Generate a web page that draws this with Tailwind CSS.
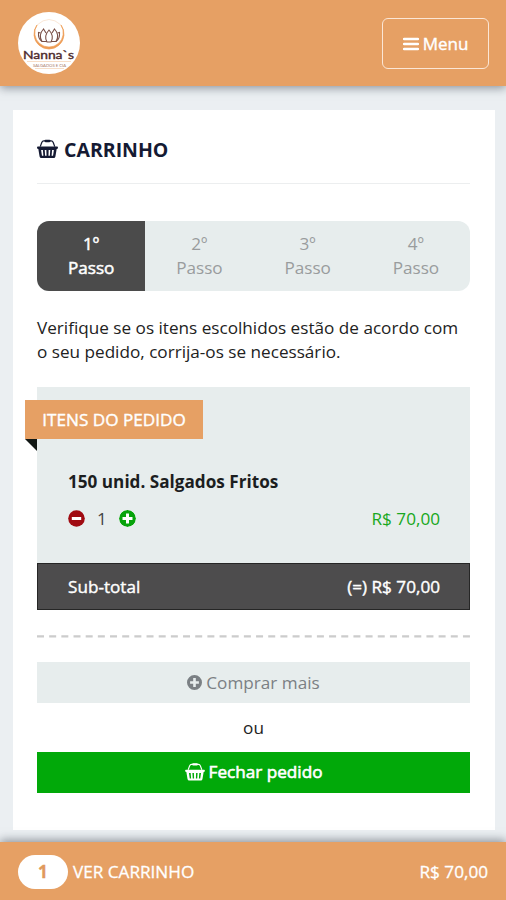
<!DOCTYPE html>
<html lang="pt-BR">
<head>
<meta charset="utf-8">
<title>Carrinho</title>
<script src="https://cdn.jsdelivr.net/npm/@tailwindcss/browser@4"></script>
</head>
<body class="h-[900px] w-[506px] overflow-hidden bg-[#ebeff2] font-['Open_Sans','Noto_Sans',sans-serif] text-[17.15px] leading-[23.5px] text-[#222]">
<svg class="hidden">
  <symbol id="basket" viewBox="0 0 22 20">
    <path d="M3.400 7.500 L5 3.200 Q5.600 1.600 7.200 1.600 H14.800 Q16.400 1.600 17 3.200 L18.600 7.500" fill="none" stroke="currentColor" stroke-width="1.300"/>
    <rect x="7.800" y="0.400" width="6.400" height="2.500" rx="1.200" fill="currentColor"/>
    <path fill="currentColor" fill-rule="evenodd" d="M1 7.400H21Q22 7.400 22 8.500T21 10H20.600L19.300 17.800Q19 19.500 17.500 19.500H4.500Q3 19.500 2.700 17.800L1.400 10H1Q0 9.600 0 8.500T1 7.400ZM4.300 11 5.200 17.200H6.700L6.200 11ZM8.100 11 8.500 17.200H10L9.800 11ZM12.200 11 12 17.200H13.500L13.900 11ZM15.800 11 15.300 17.200H16.800L17.700 11Z"/>
  </symbol>
  <symbol id="plus" viewBox="0 0 16 16">
    <path fill="currentColor" fill-rule="evenodd" d="M8 0A8 8 0 1 1 8 16A8 8 0 1 1 8 0ZM6.600 3.300V6.600H3.300V9.400H6.600V12.700H9.400V9.400H12.700V6.600H9.400V3.300Z"/>
  </symbol>
</svg>
<div class="flex h-full flex-col">
  <header class="z-10 flex h-[86px] shrink-0 items-center justify-between bg-[#e6a064] pr-[17px] pl-[18px] shadow-[0_2px_9px_rgba(60,70,80,0.55)]">
    <svg class="h-[62px] w-[62px]" viewBox="0 0 62 62">
      <circle cx="31" cy="31" r="31" fill="#fff"/>
      <path d="M19 13A15 15 0 1 0 43 13A14.300 14.300 0 1 1 19 13Z" fill="#ee9c54" stroke="#ee9c54" stroke-width=".7"/>
      <path d="M19 13Q31 2 43 13" fill="none" stroke="#f8dcc4" stroke-width=".7"/>
      <g fill="none" stroke="#7a5148" stroke-width="1.100">
        <path d="M31 18Q25.500 24 29 30H33Q36.500 24 31 18Z"/>
        <path d="M28 21 25.500 17Q20 23 24 29.500H29"/>
        <path d="M34 21 36.500 17Q42 23 38 29.500H33"/>
        <path d="M22.500 21 20.500 20.500Q20 27 24 29.500M39.500 21 41.500 20.500Q42 27 38 29.500"/>
      </g>
      <text x="5" y="46.500" textLength="51" lengthAdjust="spacingAndGlyphs" font-family="Lato" font-size="12" fill="#4d2a2c" stroke="#4d2a2c" stroke-width=".4">Nanna`s</text>
      <path d="M9 49.500H53M17 56.500H46" stroke="#f1c7a3" stroke-width=".6"/>
      <text x="15" y="54.700" textLength="33" lengthAdjust="spacingAndGlyphs" font-family="Lato" font-size="4" fill="#a87865">SALGADOS E CIA</text>
    </svg>
    <button class="mt-px flex h-[51px] w-[107px] items-center justify-center gap-[4px] rounded-[6px] border-[1.500px] border-[#fbe6d5] text-[17px] text-white [-webkit-text-stroke:0.4px_white]">
      <svg class="h-[14px] w-[16px]" viewBox="0 0 16 14"><path d="M1 2H15M1 7H15M1 12H15" stroke="#fff" stroke-width="2.400" stroke-linecap="round"/></svg>
      <span>Menu</span>
    </button>
  </header>

  <main class="mt-[24px] ml-[13px] h-[720px] w-[482px] shrink-0 bg-white px-6">
    <h1 class="flex h-[74px] w-[433px] items-center gap-[6px] border-b border-[#eceeef] pt-[7px] text-[19.5px] font-bold text-[#151a33]">
      <svg class="-mt-[2px] h-[20px] w-[21px]"><use href="#basket"/></svg>
      <span>CARRINHO</span>
    </h1>
    <div class="mt-[37px] grid h-[70px] w-[433px] grid-cols-4 overflow-hidden rounded-[12px] bg-[#e7eded] text-center text-[#999c9d]">
      <div class="bg-[#4b4b4b] pt-[11px] text-white [-webkit-text-stroke:0.5px_white]">1º<br>Passo</div>
      <div class="pt-[11px]">2º<br>Passo</div>
      <div class="pt-[11px]">3º<br>Passo</div>
      <div class="pt-[11px]">4º<br>Passo</div>
    </div>
    <p class="mt-[25px] h-[47px] text-[17.15px] whitespace-nowrap">Verifique se os itens escolhidos estão de acordo com<br>o seu pedido, corrija-os se necessário.</p>

    <section class="mt-[24px] h-[223px] w-[433px] bg-[#e7eded]">
      <div class="flex h-[176px] flex-col pt-[13px]">
        <div class="relative -ml-[12px] flex h-[39px] w-[178px] shrink-0 items-center justify-center bg-[#e6a064] text-white [-webkit-text-stroke:0.4px_white]">
          <span class="whitespace-nowrap">ITENS DO PEDIDO</span>
          <svg class="absolute top-full left-0 h-[12px] w-[12px]" viewBox="0 0 12 12"><path d="M0 0H12V12Z" fill="#111714"/></svg>
        </div>
        <div class="mt-[31px] px-[31px] font-bold text-[#1c1e1f]">150 unid. Salgados Fritos</div>
        <div class="mt-[13px] flex items-center justify-between pr-[30px] pl-[31px]">
          <div class="flex items-center text-[#444]">
            <svg class="h-[17px] w-[17px]" viewBox="0 0 17 17"><circle cx="8.500" cy="8.500" r="8.300" fill="#a00b12"/><path d="M3.800 8.500H13.200" stroke="#fff" stroke-width="3"/></svg>
            <span class="w-[34px] text-center">1</span>
            <svg class="h-[17px] w-[17px] rounded-full bg-white text-[#07a30b]"><use href="#plus"/></svg>
          </div>
          <span class="text-[#18a821]">R$ 70,00</span>
        </div>
      </div>
      <div class="flex h-[47px] items-center justify-between border border-[#262626] bg-[#4d4c4d] pt-[1px] pr-[29px] pl-[30px] text-white [-webkit-text-stroke:0.4px_white]">
        <span>Sub-total</span><span>(=) R$ 70,00</span>
      </div>
    </section>

    <svg class="mt-[25px] block h-[3px] w-[433px]" viewBox="0 0 433 3"><path d="M0 1.300H433" stroke="#ccc" stroke-width="2.200" stroke-dasharray="7 5.170"/></svg>

    <button class="mt-[24px] flex h-[41px] w-[433px] items-center justify-center gap-[4px] bg-[#e7eded] text-[#7b8084]">
      <svg class="h-[15px] w-[15px]" viewBox="0 0 16 16"><use href="#plus"/></svg>
      <span>Comprar mais</span>
    </button>
    <div class="flex h-[49px] w-[433px] items-center justify-center">ou</div>
    <button class="flex h-[41px] w-[433px] items-center justify-center gap-[4px] bg-[#01a909] pb-px text-white [-webkit-text-stroke:0.6px_white]">
      <svg class="h-[18px] w-[20px]"><use href="#basket"/></svg>
      <span>Fechar pedido</span>
    </button>
  </main>

  <footer class="z-10 mt-[12px] flex h-[58px] shrink-0 items-center bg-[#e6a064] pt-[2px] pr-[18px] pl-[18px] text-white shadow-[0_-2px_9px_rgba(60,70,80,0.55)] [-webkit-text-stroke:0.3px]">
    <span class="flex h-[34px] w-[50px] items-center justify-center rounded-full bg-white font-bold text-[#e0995c]">1</span>
    <span class="ml-[5px]">VER CARRINHO</span>
    <span class="ml-auto">R$ 70,00</span>
  </footer>
</div>
</body>
</html>
